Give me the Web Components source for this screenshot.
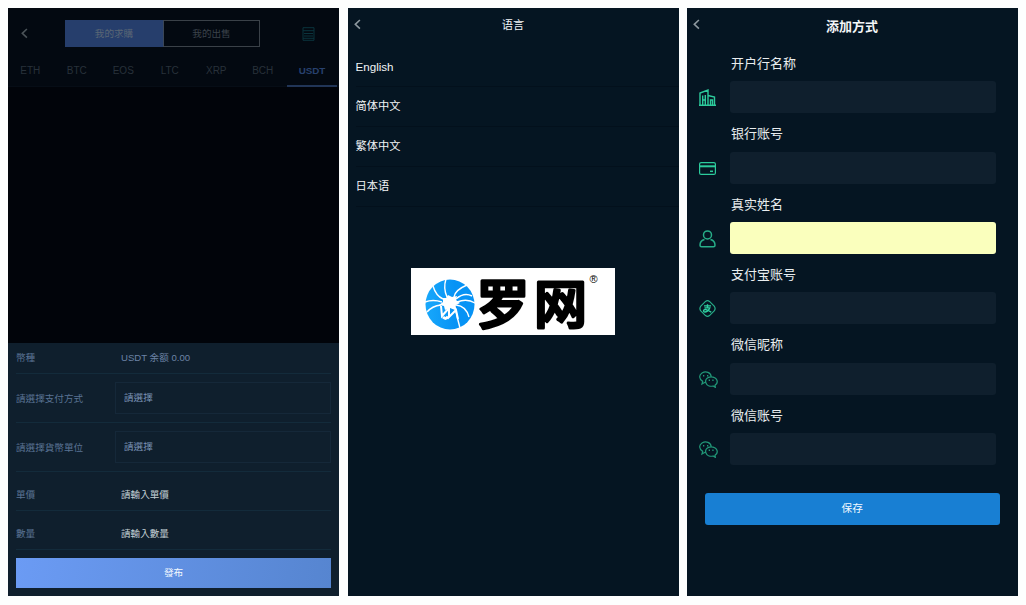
<!DOCTYPE html>
<html>
<head>
<meta charset="utf-8">
<title>Wallet screens</title>
<style>
html,body{margin:0;background:#fdfefe;height:605px;overflow:hidden}
body{font-family:"Liberation Sans","Noto Sans CJK SC",sans-serif;font-size:11.25px;color:#f1f4f6}
</style>
</head>
<body>
<screen-board>
  <trade-screen></trade-screen>
  <language-screen></language-screen>
  <payment-screen></payment-screen>
</screen-board>
<script>
const define=(name,html)=>customElements.define(name,class extends HTMLElement{
  constructor(){super();const t=document.createElement('template');t.innerHTML=html;this.attachShadow({mode:'open'}).append(t.content.cloneNode(true));}
});

define('screen-board',`<style>
:host{display:grid;grid-template-columns:331px 331px 331px;column-gap:8.5px;padding:8px;height:588px}
</style><slot></slot>`);

define('back-chevron',`<style>:host{display:block;width:7px;height:11px}svg{display:block}</style>
<svg width="7" height="11" viewBox="0 0 7 11" fill="none" stroke="currentColor" stroke-width="1.6"><path d="M5.9 1 1.3 5.3 5.9 9.7"/></svg>`);

define('coin-tab',`<style>
:host{display:block;flex:0 0 46.5px;box-sizing:border-box;text-align:center;height:32px;line-height:31px;font-size:10px;color:#28313a;text-indent:-2px}
:host([active]){flex-basis:50px;color:#28416e;font-weight:bold;font-size:9.8px;border-bottom:2px solid #213557;text-indent:0}
</style><slot></slot>`);

define('form-row',`<style>
:host{display:flex;align-items:center;box-sizing:border-box;height:49px;border-bottom:1px solid #132b3b;padding-bottom:1px;font-size:9.6px}
:host([first]){height:31px;padding-bottom:2px}
:host([plain]){height:39px;padding-top:6px;padding-bottom:1px}
.l{width:105px;color:#5a7394}
.v{flex:1;color:#6c83a5}
:host([first]) .v{font-size:9.6px}
:host([plain]) .v{color:#c3d0d5}
</style><div class="l"><slot name="label"></slot></div><div class="v"><slot></slot></div>`);

define('select-box',`<style>
:host{display:block;box-sizing:border-box;height:32px;line-height:30px;margin:1px 0 0 -6px;padding-left:8px;border:1px solid #152839;color:#7b93b6}
</style><slot></slot>`);

define('trade-screen',`<style>
:host{display:flex;flex-direction:column;height:588px;background:#01040a;font-family:"Liberation Sans","Noto Sans CJK TC",sans-serif}
header{display:flex;align-items:center;height:51px;background:#030911;color:#4b5358}
back-chevron{margin:0 0 0 13px}
.seg{display:flex;box-sizing:border-box;width:195px;height:27px;margin-left:37px;border:1px solid #3a4148;font-size:9.6px;line-height:25px;text-align:center;color:#3b434b}
.on{width:98px;margin:-1px 0 -1px -1px;line-height:27px;background:#263e6c;border-right:1px solid #3a4656;color:#5b6775}
.off{flex:1}
.doc{margin-left:42px}
nav{display:flex;box-sizing:border-box;height:28px;background:#030911;border-bottom:1px solid #060d16}
coin-tab{margin-top:-4px}
.space{flex:1}
section{box-sizing:border-box;height:253px;background:#0f1f2d;padding:0 8px}
.btn{margin-top:8px;height:30px;line-height:30px;text-align:center;font-size:9.6px;color:#f5faff;background:linear-gradient(100deg,#6b9bf4,#5685d0)}
</style>
<header><back-chevron></back-chevron><div class="seg"><div class="on">我的求購</div><div class="off">我的出售</div></div>
<svg class="doc" width="13" height="14" viewBox="0 0 13 14" fill="none" stroke="#0b343d" stroke-width="1"><path d="M1 .7h11v12.6H1zM1 3.7h11M2 6.5h9M2 9h9M1 11.3h11"/></svg></header>
<nav><coin-tab>ETH</coin-tab><coin-tab>BTC</coin-tab><coin-tab>EOS</coin-tab><coin-tab>LTC</coin-tab><coin-tab>XRP</coin-tab><coin-tab>BCH</coin-tab><coin-tab active>USDT</coin-tab></nav>
<div class="space"></div>
<section>
<form-row first><span slot="label">幣種</span>USDT 余额 0.00</form-row>
<form-row><span slot="label">請選擇支付方式</span><select-box>請選擇</select-box></form-row>
<form-row><span slot="label">請選擇貨幣單位</span><select-box>請選擇</select-box></form-row>
<form-row plain><span slot="label">單價</span>請輸入單價</form-row>
<form-row plain><span slot="label">數量</span>請輸入數量</form-row>
<div class="btn">發布</div>
</section>`);

define('language-item',`<style>
:host{display:block;box-sizing:border-box;height:40px;line-height:39px;padding-left:8px;background:linear-gradient(#03101c,#03101c) 8px 100%/100% 1px no-repeat}
:host([latin]){font-size:11.6px}
</style><slot></slot>`);

define('brand-logo',`<style>
:host{display:block;position:absolute;left:63px;top:260px;width:204px;height:67px;background:#fff}
svg{display:block;overflow:visible}
.name{font:500 53px "Noto Sans CJK SC",sans-serif}
.reg{font:11px "Liberation Sans",sans-serif}
</style>
<svg width="204" height="67" viewBox="0 0 204 67"><defs><linearGradient id="g"><stop stop-color="#18a8fb"/><stop offset=".6" stop-color="#0793f5"/></linearGradient></defs>
<g transform="translate(14 11)">
<ellipse cx="25" cy="25.5" rx="24.500" ry="25" fill="url(#g)"/>
<path d="M18 19l3 0 2-3 4 2 5-1-1 4 4 3-4 2-1 5-5-2-5 2-1-4-5-1 4-3z" fill="#fff"/>
<g fill="none" stroke="#fff" stroke-width="1.400"><path d="M22 18Q18 9 21 0M18 20Q11 17 8 7M17 23Q8 20 0 23M16 26Q7 27 2 33M29 18Q30 11 42 6M31 20Q39 13 47 17M32 23Q42 19 50 24M31 26Q41 27 44 38M30 28Q32 38 35 49"/><path d="M16 27l1 10 7-8 0 9 7-7 2 9" stroke-width="2"/><path d="M18 38q3 3 5-.5" stroke-width="3"/></g></g>
<g class="name" stroke="#000" stroke-width="3" stroke-linejoin="round"><text x="65.500" y="56">罗</text><text x="123" y="56">网</text></g>
<text class="reg" x="178.500" y="15">®</text></svg>`);

define('language-screen',`<style>
:host{display:block;position:relative;height:588px;background:#051522;font-size:11.25px}
header{display:flex;align-items:center;height:32px;padding:0 6px;color:#8c979e}
.t{flex:1;text-align:center;color:#f1f4f6;margin-top:-1px}
back-chevron{margin-right:-7px}
.list{padding-top:7px}
</style>
<header><back-chevron></back-chevron><div class="t">语言</div></header>
<div class="list"><language-item latin>English</language-item><language-item>简体中文</language-item><language-item>繁体中文</language-item><language-item>日本语</language-item></div>
<brand-logo></brand-logo>`);

define('input-field',`<style>
:host{display:grid;grid-template:38.3px 32px/43px 266px;height:70.3px;color:#e9edef}
.l{grid-column:2;line-height:20px;padding-top:11px;padding-left:1px;font-size:13px}
.i{grid-column:1;justify-self:start;margin:1px 0 0 12px;align-self:center;line-height:0}
.box{border-radius:3px;background:#0f1f2d}
:host([filled]) .box{background:#faffbd}
</style><div class="l"><slot></slot></div><div class="i"><slot name="icon"></slot></div><div class="box"></div>`);

const wechat='<svg slot="icon" width="19" height="17" viewBox="0 0 19 17" fill="none" stroke="#219777" stroke-width="1.25"><path d="M6 11.2 3 13l.7-2.6C-.2 8-.2 4 3 2c4-2.4 9-.4 9.2 3.7M7 12C5.5 8.500 8.500 5.800 12 5.800c6 0 8.200 5.800 4 8.500l.3 2-2.300-1.300c-3.300.8-6.200-.7-7-3z"/><path d="M4 4.700h1.300M8 4.700h1.300M9.700 9.300h1.300M13.300 9.300h1.300" stroke-width="1.400"/></svg>';
define('payment-screen',`<style>
:host{display:block;height:588px;background:#051522}
header{display:flex;height:35.2px;padding:0 7px 0 6px;color:#8c979e}
back-chevron{margin:11px -7px 0 0}
.t{flex:1;line-height:37px;text-align:center;color:#f3f6f8;font-size:13px;font-weight:bold}
.btn{margin:28px 18px 0 17.5px;height:32px;line-height:31px;text-align:center;background:#187fd3;color:#f2f9ff;border-radius:3px;font-size:10.7px}
</style>
<header><back-chevron></back-chevron><div class="t">添加方式</div></header>
<input-field>开户行名称<svg slot="icon" width="17" height="17" viewBox="0 0 17 17" fill="none" stroke="#2ccb9c" stroke-width="1.400"><path d="M1 16V4l8-3v15M9 6.500l6.500 1.500V16M0 16.200h17M3.700 16V6.500M6.300 16V6M11.500 16v-5h2v5M3.700 11h2.600"/></svg></input-field>
<input-field>银行账号<svg slot="icon" width="17" height="13" viewBox="0 0 17 13" fill="none" stroke="#2ccb9c" stroke-width="1.200"><rect x=".6" y=".6" width="15.800" height="11.800" rx="1.500"/><path d="M1 4.300h15" stroke-width="2"/><path d="M11 9.300h3" stroke-width="1.500"/></svg></input-field>
<input-field filled>真实姓名<svg slot="icon" width="17" height="18" viewBox="0 0 17 18" fill="none" stroke="#27ad88" stroke-width="1.500"><circle cx="8.500" cy="4.900" r="4"/><path d="M5.500 9.500C2.500 10.200 1 13 1 15.300q0 1.500 1.500 1.500h12q1.500 0 1.500-1.500c0-2.300-1.500-5.100-4.500-5.800"/></svg></input-field>
<input-field>支付宝账号<svg slot="icon" width="17" height="17" viewBox="0 0 17 17" fill="none" stroke="#27ad88" stroke-width="1.200"><path d="M6.500 1.400q2-1.500 4 0l4.700 4.700q1.800 2.400 0 4.800l-4.700 4.700q-2 1.500-4 0L1.800 10.900q-1.800-2.400 0-4.800z"/><path d="M5 5.900h7M8.500 4.200v3.700M5.500 7.900h5.300C10 10.500 7 12.500 5.200 11.900c-1.700-1 .2-3.200 2.600-2 1.700.7 3 1.400 4.500 2.200" stroke="#2ed0a0" stroke-width="1.400"/></svg></input-field>
<input-field>微信昵称${wechat}</input-field>
<input-field>微信账号${wechat}</input-field>
<div class="btn">保存</div>`);
</script>
</body>
</html>
